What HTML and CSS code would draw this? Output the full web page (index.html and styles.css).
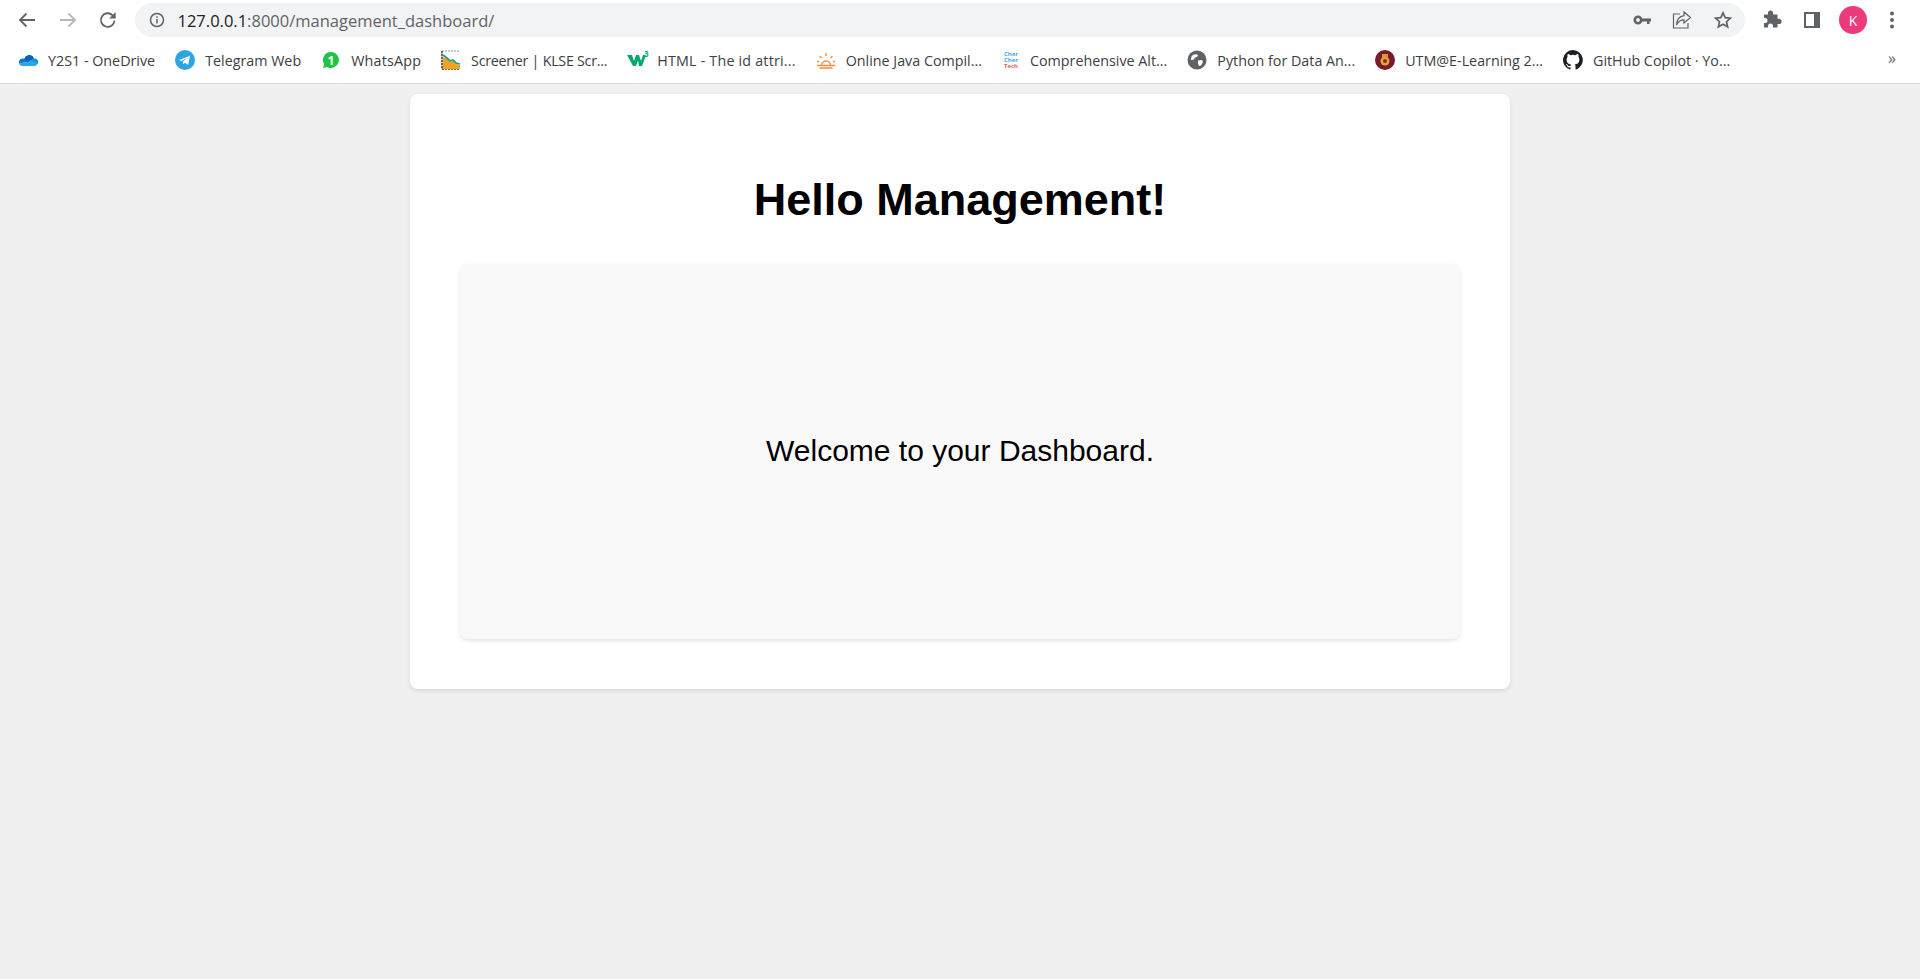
FILE: index.html
```html
<!DOCTYPE html>
<html lang="en">
<head>
    <meta charset="UTF-8">
    <meta name="viewport" content="width=device-width, initial-scale=1.0">
    <title>Management Dashboard</title>
    <link rel="stylesheet" href="styles.css">
</head>
<body>

    <!-- Browser toolbar -->
    <div class="browser-bar">
        <div class="toolbar">
            <span class="tool-btn">
                <svg width="20" height="20" viewBox="0 0 20 20" fill="none" stroke="#5f6368" stroke-width="1.8"><path d="M18 10H3M9.5 3.5 3 10l6.500 6.500"/></svg>
            </span>
            <span class="tool-btn">
                <svg width="20" height="20" viewBox="0 0 20 20" fill="none" stroke="#b4b7bb" stroke-width="1.800"><path d="M2 10h15M10.500 3.500 17 10l-6.500 6.500"/></svg>
            </span>
            <span class="tool-btn">
                <svg width="20" height="20" viewBox="0 0 20 20" fill="none" stroke="#5f6368" stroke-width="1.800"><path d="M16.500 10.500a6.800 6.800 0 1 1-1.900-5.200L17 7.500"/><path d="M17.600 2v6.400h-6.400z" fill="#5f6368" stroke="none"/></svg>
            </span>
            <div class="omnibox">
                <svg class="info-icon" width="16" height="16" viewBox="0 0 16 16" fill="none" stroke="#5f6368" stroke-width="1.500"><circle cx="8" cy="8" r="6.500"/><path d="M8 7v4.500M8 4.200v1.600"/></svg>
                <span class="url"><span class="url-host">127.0.0.1</span>:8000/management_dashboard/</span>
                <div class="omni-icons">
                    <svg width="18" height="18" viewBox="0 0 18 18" fill="#5f6368"><path d="M5 4.500a4.500 4.500 0 1 1-.01 9 4.500 4.500 0 0 1 .01-9zm0 2.600a1.900 1.900 0 1 0 0 3.800 1.900 1.900 0 0 0 0-3.800z"/><path d="M9 7.500h9v3h-1.500v2.500h-2.500v-2.500H9z"/></svg>
                    <svg width="20" height="20" viewBox="0 0 20 20" fill="none" stroke="#5f6368" stroke-width="1.200"><path d="M8 4H1.500v14H16v-5"/><path d="M12 2l6.500 5.500L12 13v-3.200C8.500 9.800 6 11.500 4.500 15c.2-5 3-8.700 7.500-9.300z"/></svg>
                    <svg width="20" height="20" viewBox="0 0 20 20" fill="none" stroke="#5f6368" stroke-width="1.700"><path d="m10 2.800 2.200 4.800 5.200.6-3.900 3.500 1.100 5.100L10 14.200l-4.600 2.600 1.100-5.100L2.600 8.200l5.200-.6z"/></svg>
                </div>
            </div>
            <div class="tool-right">
                <svg width="20" height="20" viewBox="0 0 20 20" fill="#5f6368"><path d="M3 6h4V4.500a2.500 2.500 0 0 1 5 0V6h4.500v4.300H18a2.600 2.600 0 0 1 0 5.200h-1.500V19H12v-1.500a2.500 2.500 0 0 0-5 0V19H3v-4.500h1a2.500 2.500 0 0 0 0-5H3z" transform="translate(-1 -1.500)"/></svg>
                <svg width="20" height="20" viewBox="0 0 20 20" fill="#5f6368"><path d="M2 2h16v16H2zm2 2v12h8V4z"/></svg>
                <span class="avatar">K</span>
                <svg class="menu-dots" width="6" height="20" viewBox="0 0 6 20" fill="#5f6368"><circle cx="3" cy="3.500" r="2"/><circle cx="3" cy="10" r="2"/><circle cx="3" cy="16.500" r="2"/></svg>
            </div>
        </div>

        <!-- Bookmarks -->
        <div class="bookmarks">
            <a href="#" class="bookmark">
                <svg width="20" height="20" viewBox="0 0 20 20"><path d="M7.500 6.500a5 5 0 0 1 8.500 2.200l-5 4.500L5.500 10z" fill="#0364b8"/><path d="M16 8.500a3.500 3.500 0 0 1 3.500 5.500L12 11z" fill="#1490df"/><path d="M5.500 8.600A3.800 3.800 0 0 0 1 13.500L9 12z" fill="#0f78d4"/><path d="M1 13.500A3.500 3.500 0 0 0 4.500 16h12a3.500 3.500 0 0 0 3-2.500L13 10l-4 2z" fill="#28a8ea"/></svg>
                Y2S1 - OneDrive
            </a>
            <a href="#" class="bookmark">
                <svg width="20" height="20" viewBox="0 0 20 20"><circle cx="10" cy="10" r="10" fill="#2ca5e0"/><path d="m4 10 11-4.300-1.800 9.300-3.200-2.300-1.700 1.600-.4-2.900 4.700-3.900-5.900 3.500z" fill="#fff"/></svg>
                Telegram Web
            </a>
            <a href="#" class="bookmark bookmark-loose">
                <svg width="20" height="20" viewBox="0 0 20 20"><path d="M10 2a8 8 0 1 1-4 15l-4 1 1.200-3.700A8 8 0 0 1 10 2z" fill="#1fc444"/><text x="10" y="14.500" class="wa-digit">1</text></svg>
                WhatsApp
            </a>
            <a href="#" class="bookmark bookmark-tight">
                <svg width="20" height="20" viewBox="0 0 20 20"><path d="M1 19V1h18" fill="none" stroke="#999" stroke-width="1" stroke-dasharray="2 1"/><path d="M1 1v18h18" fill="none" stroke="#444" stroke-width="1.500" stroke-dasharray="2 1"/><path d="M2 7l4 2 3 3 3-1 3 3 4 1v4H2z" fill="#f2a21c"/><path d="M2 5l4 3 3 3 3-1 3 3 4 1" fill="none" stroke="#2a9a8c" stroke-width="1.800"/></svg>
                Screener | KLSE Scr...
            </a>
            <a href="#" class="bookmark bookmark-loose">
                <svg class="w3-icon" width="22" height="20" viewBox="0 0 22 20"><path d="M0 5h5l2 6 2-6h3l2 6 2-6h3l-4 11h-3L11 10.500 9 16H6z" fill="#04aa6d"/><text x="17" y="7" class="w3-digit">3</text></svg>
                HTML - The id attri...
            </a>
            <a href="#" class="bookmark">
                <svg width="20" height="20" viewBox="0 0 20 20" fill="none" stroke="#f58b3c" stroke-width="1.300"><path d="M1 15.500h18M3.500 18h13M5.500 15.500a4.500 4.500 0 1 1 9 0M10 3v3M3.500 6l2 2M16.500 6l-2 2M1 11.500h2M17 11.500h2"/></svg>
                Online Java Compil...
            </a>
            <a href="#" class="bookmark">
                <span class="chertech"><span>Cher</span><span>Cher</span><span class="chertech-red">Tech</span></span>
                Comprehensive Alt...
            </a>
            <a href="#" class="bookmark">
                <svg width="20" height="20" viewBox="0 0 20 20"><circle cx="10" cy="10" r="9.500" fill="#5f6368"/><path d="M6 5c2-1 4-1 5 0l-1 2-2 .5-1 2-3 .5C3.500 8 4.500 6 6 5zM11 10.500l4-.5 1 2-2 3.500-2 .5-1-2.500z" fill="#fff"/></svg>
                Python for Data An...
            </a>
            <a href="#" class="bookmark">
                <svg width="20" height="20" viewBox="0 0 20 20"><circle cx="10" cy="10" r="10" fill="#7a1a2e"/><circle cx="10" cy="11" r="4.500" fill="#e0a63a"/><rect x="7" y="4" width="6" height="3" fill="#d69a36"/><circle cx="10" cy="11" r="2" fill="#8a2a24"/></svg>
                UTM@E-Learning 2...
            </a>
            <a href="#" class="bookmark">
                <svg width="20" height="20" viewBox="0 0 16 16" fill="#1b1f23"><path d="M8 0a8 8 0 0 0-2.500 15.600c.4.100.500-.200.500-.400v-1.400c-2.200.500-2.700-1-2.700-1-.400-.900-.900-1.200-.900-1.200-.700-.500.100-.500.100-.500.800.100 1.200.800 1.200.800.700 1.200 1.900.900 2.300.700.100-.500.300-.900.500-1.100-1.800-.200-3.600-.900-3.600-4 0-.900.300-1.600.800-2.100-.100-.200-.400-1 .100-2.100 0 0 .700-.200 2.200.800a7.500 7.500 0 0 1 4 0c1.500-1 2.200-.800 2.200-.800.400 1.100.200 1.900.100 2.100.500.600.800 1.300.800 2.100 0 3.100-1.900 3.700-3.700 3.900.300.300.600.800.600 1.500v2.200c0 .200.100.500.600.400A8 8 0 0 0 8 0z"/></svg>
                GitHub Copilot · Yo...
            </a>
            <span class="more-bookmarks">»</span>
        </div>
    </div>

    <!-- Page content -->
    <div class="container">
        <h1>Hello Management!</h1>
        <div class="dashboard-box">
            <p>Welcome to your Dashboard.</p>
        </div>
    </div>

</body>
</html>
```

FILE: styles.css
```css
body {
    font-family: "Liberation Sans", Arial, sans-serif;
    background-color: #f0f0f0;
    color: black;
    margin: 0;
    height: 979px;
    overflow: hidden;
}

/* Browser bar */
.browser-bar {
    background: white;
    height: 83px;
    border-bottom: 1px solid #dadce0;
    font-family: "Open Sans", "Noto Sans", sans-serif;
}

.toolbar {
    display: flex;
    align-items: center;
    height: 34px;
    padding: 3px 0 4px 7px;
}

.tool-btn {
    width: 40.5px;
    display: flex;
    align-items: center;
    justify-content: center;
}

.omnibox {
    flex: 1;
    height: 34px;
    margin-left: 6px;
    background: #f1f3f4;
    border-radius: 17px;
    display: flex;
    align-items: center;
    padding: 0 12px 0 14px;
}

.info-icon {
    margin-right: 13px;
}

.url {
    font-size: 16.5px;
    color: #5f6368;
}

.url-host {
    color: #202124;
}

.omni-icons {
    margin-left: auto;
    display: flex;
    align-items: center;
    gap: 21px;
}

.tool-right {
    width: 175px;
    display: flex;
    align-items: center;
    padding-left: 17px;
    gap: 20px;
    box-sizing: border-box;
}

.avatar {
    width: 28px;
    height: 28px;
    margin-left: -3px;
    border-radius: 50%;
    background: #ec3a7c;
    color: white;
    font-size: 14px;
    display: flex;
    align-items: center;
    justify-content: center;
}

.menu-dots {
    margin-left: 2px;
}

/* Bookmarks */
.bookmarks {
    display: flex;
    align-items: center;
    height: 38px;
    padding-left: 18px;
    position: relative;
}

.bookmark {
    display: flex;
    align-items: center;
    gap: 10px;
    margin-right: 20px;
    color: #3c4043;
    font-size: 14.3px;
    text-decoration: none;
    white-space: nowrap;
}

/* label widths differ a bit from the real browser font */
.bookmark-tight {
    letter-spacing: -0.27px;
}

.bookmark-loose {
    letter-spacing: 0.2px;
}

.bookmark svg {
    flex-shrink: 0;
}

.w3-icon {
    margin-right: -2px;
}

.wa-digit {
    fill: white;
    font-size: 12px;
    font-weight: bold;
    text-anchor: middle;
}

.w3-digit {
    fill: #04aa6d;
    font-size: 8px;
    font-weight: bold;
}

.chertech {
    width: 18px;
    display: flex;
    flex-direction: column;
    align-items: center;
    color: #3fa9e0;
    font-size: 6px;
    font-weight: bold;
    line-height: 6px;
}

.chertech-red {
    color: #ee5a5a;
}

.more-bookmarks {
    position: absolute;
    right: 24px;
    top: 6px;
    color: #5f6368;
    font-size: 16px;
}

/* Page content */
.container {
    width: 1000px;
    height: 495px;
    margin: 10px auto 0;
    padding: 50px;
    background: white;
    border-radius: 8px;
    box-shadow: 0 2px 4px rgba(0, 0, 0, 0.1);
    text-align: center;
    display: flex;
    flex-direction: column;
}

h1 {
    font-size: 45px;
    margin: 30px 0 38px;
    line-height: 52px;
}

.dashboard-box {
    flex: 1;
    padding-bottom: 2px;
    background: #f9f9f9;
    border-radius: 8px;
    box-shadow: 0 2px 4px rgba(0, 0, 0, 0.1);
    display: flex;
    align-items: center;
    justify-content: center;
}

.dashboard-box p {
    font-size: 30px;
    margin: 0;
}
```
